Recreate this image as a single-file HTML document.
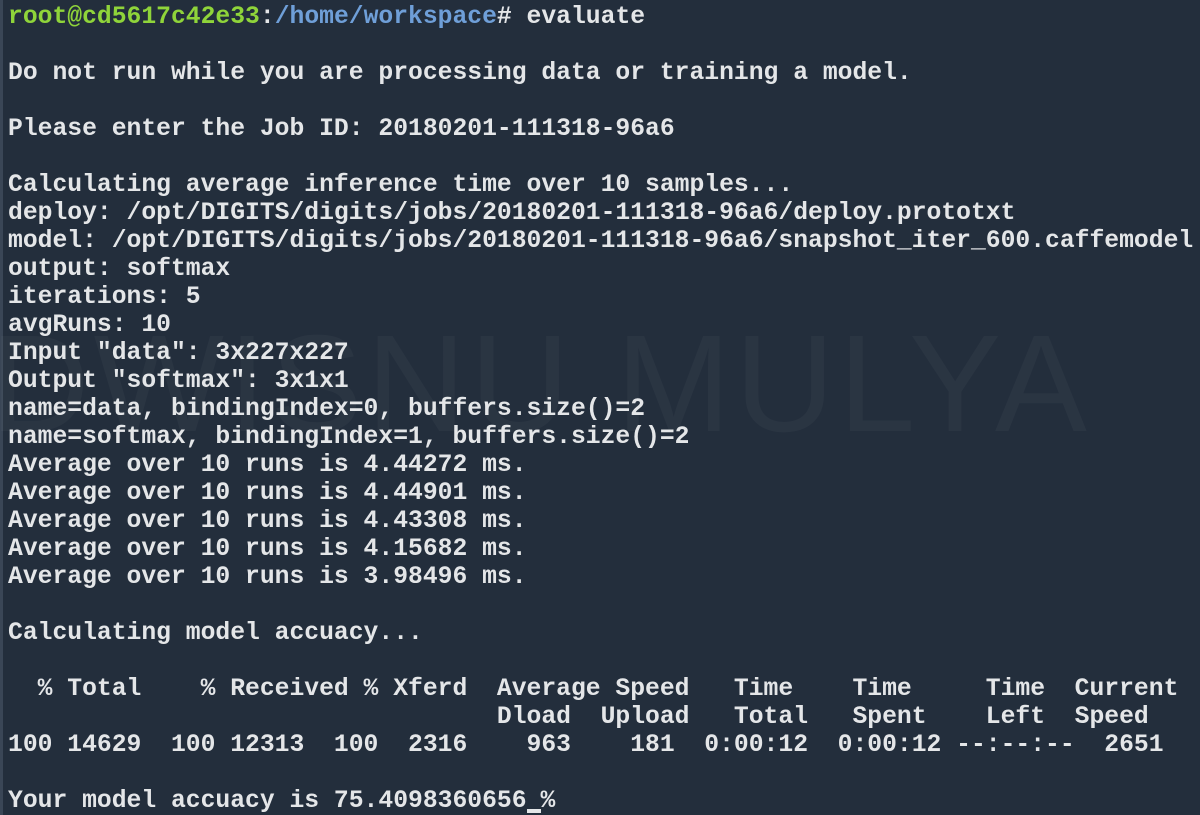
<!DOCTYPE html>
<html><head><meta charset="utf-8"><style>
html,body{margin:0;padding:0;}
body{width:1200px;height:815px;background:#232e3c;overflow:hidden;position:relative;}
.bar{position:absolute;left:0;top:0;width:3px;height:815px;background:#3a4656;}
pre{position:absolute;left:8px;top:3px;margin:0;font-family:"Liberation Mono",monospace;font-size:24.7px;line-height:28px;color:#e4e6e8;font-weight:bold;letter-spacing:0;}
.g{color:#8fd43a;}
.b{color:#6f9fd8;}
.wm{position:absolute;left:-10px;top:305px;font-family:"Liberation Sans",sans-serif;font-size:138px;color:rgba(255,255,255,0.035);white-space:nowrap;letter-spacing:4px;}
.cur{display:inline-block;width:14px;height:4px;background:#e4e6e8;vertical-align:-6px;}
</style></head><body>
<div class="bar"></div>
<div class="wm">DWISNU MULYA</div>
<pre><span class="g">root@cd5617c42e33</span>:<span class="b">/home/workspace</span># evaluate

Do not run while you are processing data or training a model.

Please enter the Job ID: 20180201-111318-96a6

Calculating average inference time over 10 samples...
deploy: /opt/DIGITS/digits/jobs/20180201-111318-96a6/deploy.prototxt
model: /opt/DIGITS/digits/jobs/20180201-111318-96a6/snapshot_iter_600.caffemodel
output: softmax
iterations: 5
avgRuns: 10
Input "data": 3x227x227
Output "softmax": 3x1x1
name=data, bindingIndex=0, buffers.size()=2
name=softmax, bindingIndex=1, buffers.size()=2
Average over 10 runs is 4.44272 ms.
Average over 10 runs is 4.44901 ms.
Average over 10 runs is 4.43308 ms.
Average over 10 runs is 4.15682 ms.
Average over 10 runs is 3.98496 ms.

Calculating model accuacy...

  % Total    % Received % Xferd  Average Speed   Time    Time     Time  Current
                                 Dload  Upload   Total   Spent    Left  Speed
100 14629  100 12313  100  2316    963    181  0:00:12  0:00:12 --:--:--  2651

Your model accuacy is 75.4098360656<span class="cur" style="margin-left:0"></span>%</pre>
</body></html>
